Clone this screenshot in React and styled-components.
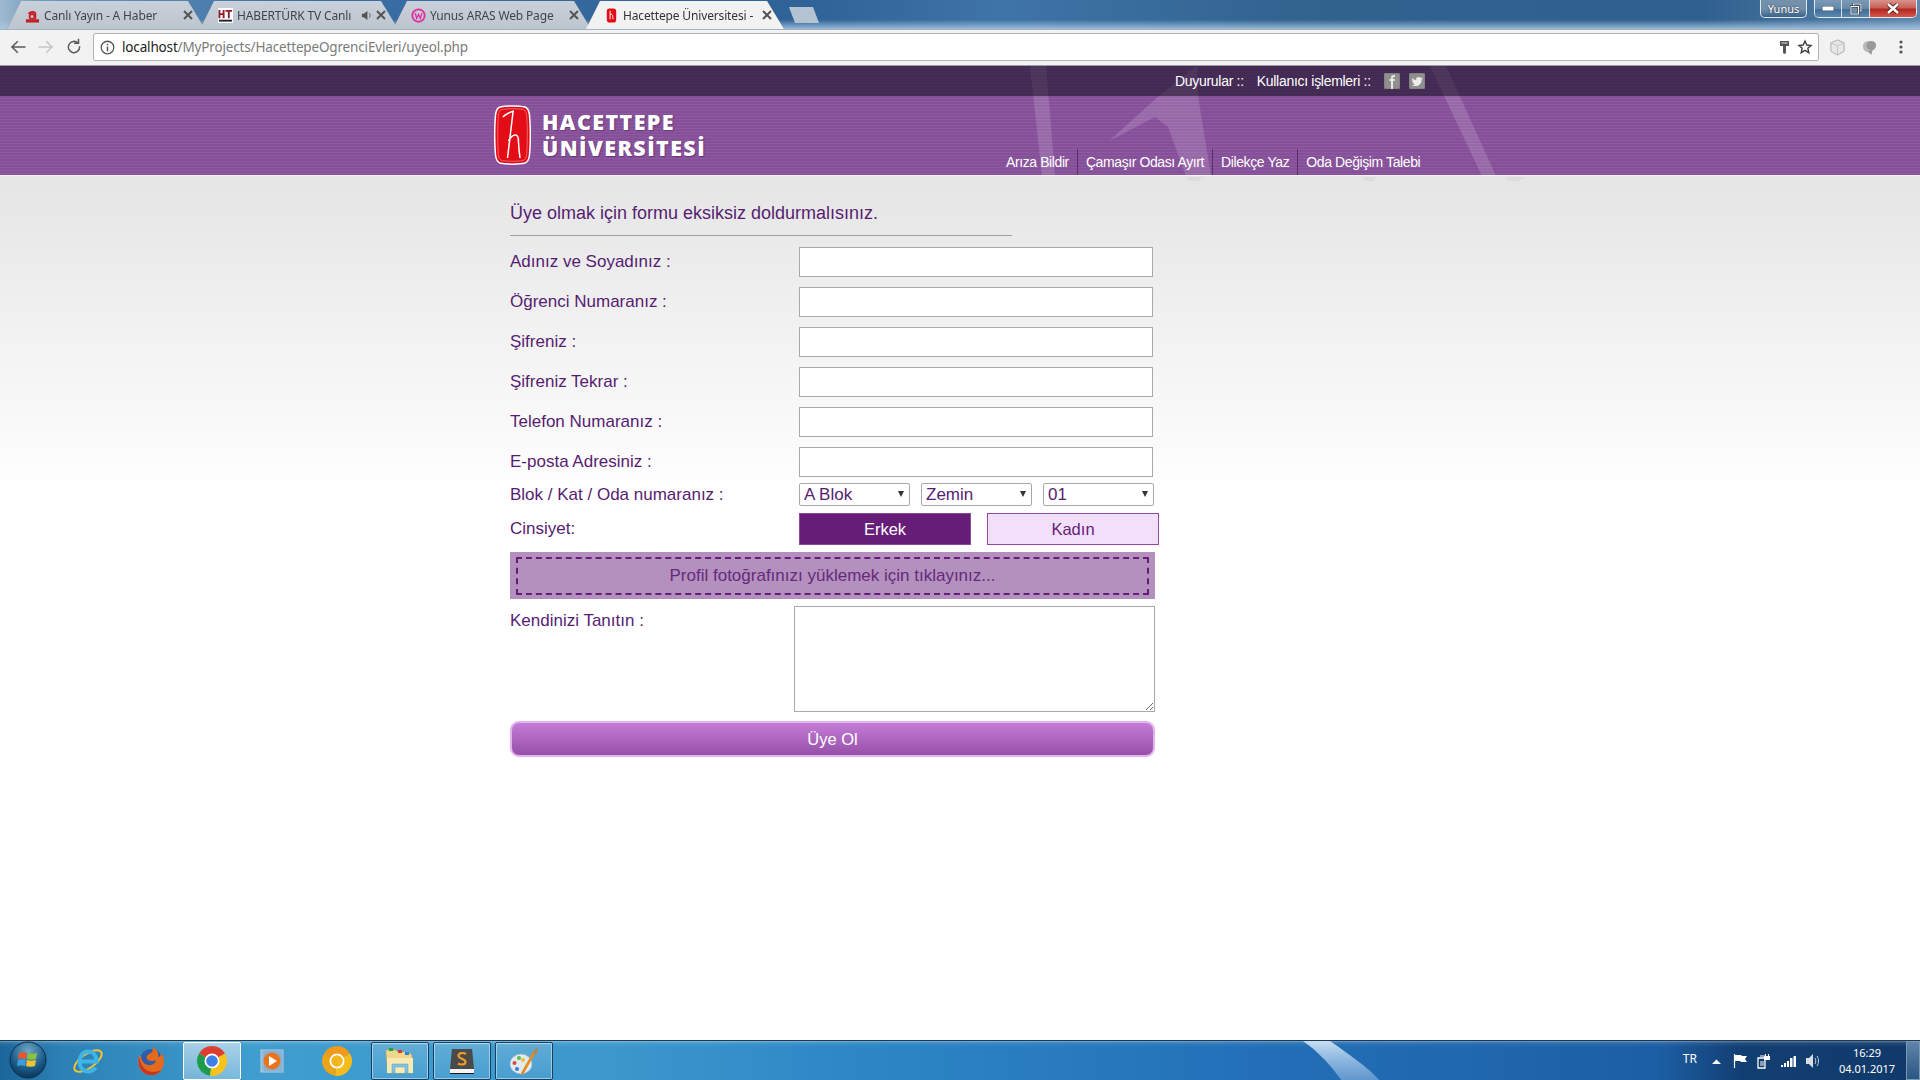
import React from "react";
import styled, { createGlobalStyle } from "styled-components";

const Global = createGlobalStyle`
  html, body { margin: 0; padding: 0; height: 100%; overflow: hidden; }
  #root { height: 100%; }
  * { box-sizing: border-box; }
`;

const Screen = styled.div`
  width: 1920px; height: 1080px; display: flex; flex-direction: column;
  font-family: "Liberation Sans", Arial, sans-serif; background: #fff; overflow: hidden;
`;

/* ---------- browser chrome ---------- */
const TitleBar = styled.div`
  height: 29px; flex: none; display: flex; align-items: flex-start; position: relative; padding-left: 7px;
  background:
    linear-gradient(180deg, rgba(45,93,141,0) 0, rgba(45,93,141,0) 68%, rgba(170,200,226,.85) 100%),
    linear-gradient(90deg, #9fbad0 0, #6f98bb 40px, #3a6fa6 300px, #2f6296 800px, #3f74a8 1000px, #31638f 1300px, #2f5f8e 1700px, #5e88ae 1920px);
`;
const TabRow = styled.div`
  display: flex; height: 29px; align-items: flex-end;
  filter: drop-shadow(0 0 .6px #5d6f80);
`;
const Tab = styled.div`
  width: 198px; height: 28px; margin-right: -5px; padding: 0 12px 0 36px; display: flex; align-items: center; gap: 4px;
  position: relative;
  clip-path: polygon(0 100%, 14px 0, 181px 0, 198px 100%);
  background: ${(p) => (p.$active ? "#f2f2f2" : "linear-gradient(180deg,#c8d1da 0,#bdc6cf 100%)")};
  z-index: ${(p) => (p.$active ? 2 : 1)};
  font: 12px "Noto Sans", "Open Sans", sans-serif; letter-spacing: -0.15px;
  color: ${(p) => (p.$active ? "#333" : "#3d4650")};
`;
const TabIcon = styled.svg`
  position: absolute; left: 18px; top: 7px; width: 15px; height: 15px;
`;
const TabTitle = styled.span`
  flex: 1; min-width: 0; white-space: nowrap; overflow: hidden; margin-left: 1px;
`;
const NewTab = styled.div`
  width: 30px; height: 16px; margin: 7px 0 0 10px; flex: none;
  clip-path: polygon(0 0, 24px 0, 30px 100%, 6px 100%);
  background: #b4c3d1;
`;
const WindowArea = styled.div`
  margin-left: auto; display: flex; height: 18px; padding-right: 3px;
`;
const UserChip = styled.div`
  width: 47px; height: 18px; margin-right: 7px; border: 1px solid #dfe8f0; border-top: none; border-radius: 0 0 5px 5px;
  background: linear-gradient(180deg, #7592ad 0, #6f8ea9 55%, #39638d 100%);
  color: #fff; font: 11px "Noto Sans", sans-serif; text-align: center; line-height: 17px; text-shadow: 0 0 2px #223;
`;
const WinButtons = styled.div`
  display: flex; width: 103px; height: 18px; border: 1px solid #e0e8ef; border-top: none; border-radius: 0 0 5px 5px; overflow: hidden;
`;
const WinBtn = styled.div`
  flex: ${(p) => p.$grow || 1}; display: flex; align-items: center; justify-content: center;
  border-right: ${(p) => (p.$last ? "none" : "1px solid #d4e0ea")};
  background: ${(p) => p.$bg || "linear-gradient(180deg,#7c9ab6 0,#6688a8 50%,#3e6c97 52%,#5d88ad 100%)"};
`;
const Toolbar = styled.div`
  height: 37px; flex: none; display: flex; align-items: center; background: #f2f2f2; border-bottom: 1px solid #9d9d9d; padding-bottom: 1px; border-top: 1px solid #a4b4c3;
`;
const NavIcons = styled.div`
  width: 93px; flex: none; display: flex; align-items: center; gap: 10px; padding-left: 9px;
`;
const Omnibox = styled.div`
  width: 1726px; height: 28px; flex: none; background: #fff; border: 1px solid #b2b2b2; border-radius: 2px;
  display: flex; align-items: center; padding: 0 5px 0 5px;
  font: 13.5px "Noto Sans", sans-serif; color: #7a7a7a;
`;
const InfoIcon = styled.svg`
  width: 15px; height: 15px; margin: 0 7px 0 1px; flex: none;
`;
const Url = styled.span`
  flex: 1; white-space: nowrap; letter-spacing: -0.16px;
  b { font-weight: 400; color: #222; }
`;
const OmniRight = styled.div`
  display: flex; align-items: center; gap: 8px;
`;
const ToolRight = styled.div`
  flex: 1; display: flex; align-items: center; gap: 15px; padding-left: 10px;
  svg:last-child { margin-left: 6px; }
`;

/* ---------- page ---------- */
const Page = styled.main`
  flex: 1; min-height: 0; position: relative; overflow: hidden; display: flex; flex-direction: column;
  background: linear-gradient(180deg, #e5e5e5 110px, #fff 430px);
`;
const Watermark = styled.svg`
  position: absolute; left: 0; top: 0; width: 1920px; height: 120px; pointer-events: none; z-index: 1;
`;
const TopBar = styled.div`
  height: 30px; flex: none; display: flex; justify-content: flex-start; align-items: center; padding-left: 1175px; gap: 13px;
  background: repeating-linear-gradient(180deg, #432a53 0 2px, #472e57 2px 3px);
  color: #fff; font-size: 14px;
`;
const TopLink = styled.span`
  letter-spacing: -0.3px; white-space: nowrap; position: relative; z-index: 2;
`;
const Social = styled.div`
  display: flex; gap: 9px; position: relative; z-index: 2;
`;
const SocialIcon = styled.svg`
  width: 16px; height: 16px; display: block;
`;
const Header = styled.header`
  height: 80px; flex: none; display: flex; align-items: stretch; padding-left: 494px; border-bottom: 1px solid #f4f2f5;
  background: repeating-linear-gradient(180deg, #864f99 0 2px, #8d5a9f 2px 3px);
  position: relative;
`;
const Logo = styled.div`
  display: flex; align-items: flex-start; gap: 11px; padding-top: 9px; width: 512px; position: relative; z-index: 2;
`;
const Shield = styled.svg`
  width: 37px; height: 60px; flex: none;
`;
const LogoText = styled.div`
  display: flex; flex-direction: column; padding-top: 4px;
  font: 800 21.5px/26px "Open Sans", "DejaVu Sans", sans-serif; color: #fff; letter-spacing: 1.4px;
  text-shadow: 1px 1px 1px rgba(70,30,90,.5);
`;
const MainNav = styled.nav`
  display: flex; align-self: flex-end; height: 26px; position: relative; z-index: 2;
`;
const NavLink = styled.a`
  display: flex; align-items: center; padding: 0 8px; color: #fff; font-size: 14px; letter-spacing: -0.4px; white-space: nowrap;
  border-right: ${(p) => (p.$last ? "none" : "1px solid #5b3069")};
  &:first-child { padding-left: 0; }
`;

const FormWrap = styled.form`
  width: 645px; margin-left: 510px; padding-top: 25px; position: relative; z-index: 2;
  color: #571d72; font-size: 16px;
`;
const Heading = styled.h1`
  width: 502px; margin: 0 0 11px; padding-bottom: 10px; border-bottom: 1px solid #a0a0a0;
  font-size: 18px; line-height: 24px; font-weight: 400; color: #571d72; white-space: nowrap;
`;
const Row = styled.div`
  display: flex; align-items: center; height: 30px; margin-bottom: 10px;
`;
const Label = styled.label`
  width: 289px; flex: none; white-space: nowrap; font-size: 17px;
`;
const TextInput = styled.input`
  width: 354px; height: 30px; border: 1px solid #a9a9a9; background: #fff; padding: 0 4px; outline: none; font: inherit;
`;
const SelectRow = styled.div`
  display: flex; align-items: center; height: 23px; margin: -4px 0 7px;
`;
const SelectGroup = styled.div`
  display: flex; gap: 11px;
`;
const SelectBox = styled.div`
  position: relative; width: 111px; height: 23px;
  &::after {
    content: ""; position: absolute; right: 6px; top: 8px; pointer-events: none;
    border-left: 3.5px solid transparent; border-right: 3.5px solid transparent; border-top: 6px solid #333;
  }
`;
const Select = styled.select`
  appearance: none; display: block; width: 111px; height: 23px; border: 1px solid #a9a9a9; border-radius: 2px; background: #fff; padding: 0 0 0 4px;
  font: 17px "Liberation Sans", Arial, sans-serif; color: #571d72; outline: none;
`;
const GenderRow = styled.div`
  display: flex; align-items: center; height: 32px; margin-bottom: 7px;
`;
const GenderGroup = styled.div`
  display: flex; gap: 16px; margin-right: -4px;
`;
const Gender = styled.button`
  width: 172px; height: 32px; border: 1px solid ${(p) => (p.$on ? "#8a4a9e" : "#93499f")}; border-radius: 0; cursor: pointer;
  background: ${(p) => (p.$on ? "#661d78" : "#f2e0fb")}; color: ${(p) => (p.$on ? "#fff" : "#661d78")};
  font: 16.5px "Liberation Sans", Arial, sans-serif; padding: 0;
`;
const Upload = styled.div`
  height: 47px; display: flex; align-items: center; justify-content: center; position: relative;
  background: #b390bd; color: #662a7c; font-size: 17px; margin-bottom: 7px;
  &::after { content: ""; position: absolute; inset: 5px 6px 4px; border: 2px dashed #661d78; }
`;
const AboutRow = styled.div`
  display: flex; align-items: flex-start; margin-bottom: 9px;
`;
const AboutLabel = styled(Label)`
  width: 284px; padding-top: 5px;
`;
const TextArea = styled.textarea`
  display: block; width: 361px; height: 106px; border: 1px solid #a9a9a9; background: #fff; outline: none; resize: both;
`;
const Submit = styled.button`
  display: block; width: 645px; height: 36px; border: 2px solid #e3b5ef; border-radius: 9px; cursor: pointer;
  background: linear-gradient(180deg, #c47dd7 0, #9750a8 100%);
  color: #fff; font: 16.5px "Liberation Sans", Arial, sans-serif; box-shadow: 0 0 1px #e8c8f2;
`;

/* ---------- taskbar ---------- */
const Taskbar = styled.footer`
  height: 40px; flex: none; display: flex; align-items: stretch; position: relative; border-top: 1px solid #1d3a52;
  background:
    linear-gradient(180deg, rgba(255,255,255,.35) 0, rgba(255,255,255,.08) 2px, rgba(255,255,255,0) 6px),
    linear-gradient(90deg, #1a659a 0, #2c80b3 60px, #3f9dcf 250px, #3d98cd 600px, #2d87c6 850px, #2370b8 1250px, #1f66ad 1500px, #1c5ea3 1660px, #123f73 1740px, #113a6b 1900px);
`;
const Swoosh = styled.svg`
  position: absolute; left: 1270px; top: 0; width: 120px; height: 40px;
`;
const StartOrb = styled.svg`
  width: 40px; height: 40px; margin: -1px 0 0 8px; flex: none; align-self: center;
`;
const TaskApps = styled.div`
  display: flex; margin-left: 9px; align-items: stretch; position: relative;
`;
const TaskBtn = styled.div`
  width: ${(p) => p.$w || 62}px; display: flex; align-items: center; justify-content: center; border-radius: 2px;
  ${(p) => p.$open && `border: 1px solid #173f5f; box-shadow: inset 0 0 0 1px rgba(255,255,255,.45); background: linear-gradient(180deg, rgba(255,255,255,.18), rgba(255,255,255,.05)); margin: 1px 2px 0;`}
  ${(p) => p.$focus && `border: 1px solid #fff; background: linear-gradient(180deg, rgba(255,255,255,.55), rgba(255,255,255,.3)); margin: 1px 2px 0;`}
`;
const AppIcon = styled.svg`
  width: 32px; height: 32px;
`;
const Tray = styled.div`
  margin-left: auto; display: flex; align-items: center; color: #fff; position: relative;
`;
const Lang = styled.span`
  font: 12px "Noto Sans", sans-serif; margin: -4px 12px 0 0;
`;
const TrayIcons = styled.div`
  display: flex; align-items: center; gap: 9px; margin-right: 8px;
`;
const TrayIcon = styled.svg`
  width: 15px; height: 16px; display: block;
`;
const Clock = styled.div`
  width: 78px; text-align: center; font: 11px/16px "Noto Sans", sans-serif;
`;
const ShowDesktop = styled.div`
  width: 14px; align-self: stretch; border: 1px solid #7b98b4; background: linear-gradient(180deg, #5f85a8 0, #2a5683 100%);
`;

const rows = [
  "Adınız ve Soyadınız :",
  "Öğrenci Numaranız :",
  "Şifreniz :",
  "Şifreniz Tekrar :",
  "Telefon Numaranız :",
  "E-posta Adresiniz :",
];

const Icon = ({ d, size = 18, color = "#5a5a5a", w = 2 }) => (
  <svg width={size} height={size} viewBox="0 0 24 24" fill="none" stroke={color} strokeWidth={w} strokeLinecap="square">
    <path d={d} />
  </svg>
);

const Close = ({ color = "#555" }) => (
  <svg width="10" height="10" viewBox="0 0 10 10"><path d="M1 1 9 9M9 1 1 9" stroke={color} strokeWidth="2" /></svg>
);

export default function App() {
  return (
    <Screen>
      <Global />
      <TitleBar>
        <TabRow>
          <Tab>
            <TabIcon viewBox="0 0 16 16">
              <rect x="1" y="12" width="14" height="3.5" fill="#c0202a" />
              <path d="M3 6c1-3 7-4 9-1v7H10V6C8 5 5 6 5 7Z" fill="#c8232c" />
              <circle cx="7.5" cy="9" r="2.6" fill="none" stroke="#c8232c" strokeWidth="2" />
            </TabIcon>
            <TabTitle>Canlı Yayın - A Haber</TabTitle>
            <Close />
          </Tab>
          <Tab>
            <TabIcon viewBox="0 0 16 16">
              <rect width="16" height="16" fill="#fff" />
              <path d="M1.500 2v9M6 2v9M1.500 6.500H6" stroke="#8e1a2c" strokeWidth="2" fill="none" />
              <path d="M8 3h7M11.500 3v8" stroke="#8e1a2c" strokeWidth="2" fill="none" />
              <rect x="1" y="12.5" width="14" height="2" fill="#1c2230" />
            </TabIcon>
            <TabTitle>HABERTÜRK TV Canlı</TabTitle>
            <svg width="11" height="11" viewBox="0 0 12 12"><path d="M1 4h2l4-3v10L3 8H1Z" fill="#555" /><path d="M9 3.5c1.4 1.5 1.4 3.5 0 5" stroke="#555" fill="none" /></svg>
            <Close />
          </Tab>
          <Tab>
            <TabIcon viewBox="0 0 16 16">
              <circle cx="8" cy="8" r="6.6" fill="none" stroke="#e52ea0" strokeWidth="2" />
              <path d="M4.500 5.500 6 11l2-4 2 4 1.500-5.500" stroke="#e52ea0" strokeWidth="1.400" fill="none" />
            </TabIcon>
            <TabTitle>Yunus ARAS Web Page</TabTitle>
            <Close />
          </Tab>
          <Tab $active>
            <TabIcon viewBox="0 0 16 16">
              <rect x="3" y="0.5" width="10" height="15" rx="3" fill="#e30d18" />
              <path d="M6.5 3v9M6.5 7c2-1 3 0 3 5" stroke="#fff" strokeWidth="1" fill="none" />
            </TabIcon>
            <TabTitle>Hacettepe Üniversitesi -</TabTitle>
            <Close />
          </Tab>
        </TabRow>
        <NewTab />
        <WindowArea>
          <UserChip>Yunus</UserChip>
          <WinButtons>
            <WinBtn><svg width="12" height="5"><rect width="12" height="5" rx="1" fill="#fff" stroke="#456" /></svg></WinBtn>
            <WinBtn><svg width="12" height="12" viewBox="0 0 12 12" fill="none" stroke="#fff"><rect x="3.5" y="1" width="7.5" height="7" stroke="#345" strokeWidth="2.4" /><rect x="3.5" y="1" width="7.5" height="7" /><rect x="1" y="3.5" width="7.5" height="7.5" stroke="#345" strokeWidth="2.4" fill="#6f90ae" /><rect x="1" y="3.5" width="7.5" height="7.5" /></svg></WinBtn>
            <WinBtn $grow={1.75} $last $bg="linear-gradient(180deg,#d9928a 0,#c8625a 45%,#b3271e 55%,#d4574d 100%)"><svg width="14" height="11" viewBox="0 0 14 11"><path d="M2 1 12 10M12 1 2 10" stroke="#4b1512" strokeWidth="4.2" /><path d="M2 1 12 10M12 1 2 10" stroke="#fff" strokeWidth="2.6" /></svg></WinBtn>
          </WinButtons>
        </WindowArea>
      </TitleBar>

      <Toolbar>
        <NavIcons>
          <Icon d="M21 12H4M11 5l-7 7 7 7" />
          <Icon d="M3 12h17M13 5l7 7-7 7" color="#c6c6c6" />
          <Icon d="M19.5 12a7.5 7.5 0 1 1-2.3-5.4M18 2v5h-5" />
        </NavIcons>
        <Omnibox>
          <InfoIcon viewBox="0 0 16 16">
            <circle cx="8" cy="8" r="6.7" fill="none" stroke="#555" strokeWidth="1.4" />
            <path d="M8 7v5M8 4v1.6" stroke="#555" strokeWidth="1.6" />
          </InfoIcon>
          <Url><b>localhost</b>/MyProjects/HacettepeOgrenciEvleri/uyeol.php</Url>
          <OmniRight>
            <svg width="9" height="14" viewBox="0 0 9 14"><path d="M0 1h9v5H6v7l-1.500 1L3 13V6H0Z" fill="#555" /><rect x="1.500" y="2.500" width="6" height="1" fill="#ddd" /></svg>
            <svg width="16" height="16" viewBox="0 0 24 24" fill="none" stroke="#444" strokeWidth="2.2"><path d="m12 3 2.7 6 6.3.7-4.700 4.300 1.400 6.500L12 17.200 6.300 20.500 7.700 14 3 9.700 9.300 9Z" /></svg>
          </OmniRight>
        </Omnibox>
        <ToolRight>
          <svg width="17" height="17" viewBox="0 0 18 18"><path d="M9 1 16 4v9l-7 4-7-4V4Z" fill="#e6e6e6" stroke="#aaa" /><path d="M2 4l7 3 7-3M9 7v10" fill="none" stroke="#c5c5c5" /></svg>
          <svg width="17" height="17" viewBox="0 0 18 18"><circle cx="8" cy="8" r="6" fill="#b8b8b8" /><circle cx="11" cy="7" r="5" fill="#9a9a9a" /><path d="M7 13l4 4 1-5Z" fill="#999" /></svg>
          <svg width="4" height="14" viewBox="0 0 4 14" fill="#555"><circle cx="2" cy="2" r="1.6" /><circle cx="2" cy="7" r="1.6" /><circle cx="2" cy="12" r="1.6" /></svg>
        </ToolRight>
      </Toolbar>

      <Page>
        <Watermark viewBox="0 66 1920 120">
          <defs>
            <linearGradient id="wm" gradientUnits="userSpaceOnUse" x1="0" x2="0" y1="66" y2="176">
              <stop offset="0" stopColor="#fff" stopOpacity=".05" />
              <stop offset=".27" stopColor="#fff" stopOpacity=".05" />
              <stop offset=".28" stopColor="#fff" stopOpacity=".15" />
              <stop offset="1" stopColor="#fff" stopOpacity=".15" />
            </linearGradient>
          </defs>
          <g fill="url(#wm)">
            <path d="M1030 66h16l9 110h-13Z" />
            <path d="M1109 141 1160 95 1197 66 1198 96 1211 176H1186L1168 127 1155 117Z" />
            <path d="M1430 66h16l50 110h-14Z" />
          </g>
          <g fill="#000" fillOpacity=".04">
            <path d="M1186 177h16l-3 4h-10ZM1362 177h14l-3 4h-8ZM1505 177h20l-6 4h-10Z" />
          </g>
        </Watermark>
        <TopBar>
          <TopLink>Duyurular ::</TopLink>
          <TopLink>Kullanıcı işlemleri ::</TopLink>
          <Social>
            <SocialIcon viewBox="0 0 16 16">
              <rect width="16" height="16" rx="2" fill="#8f8f8f" stroke="#777" />
              <path d="M7 16V8H5.500V6H7V5c0-2 1-3 3-3h1v2h-1c-.7 0-1 .3-1 1v1h2l-.3 2H9v8Z" fill="#e8e8e8" />
            </SocialIcon>
            <SocialIcon viewBox="0 0 16 16">
              <rect width="16" height="16" rx="2" fill="#8f8f8f" stroke="#777" />
              <path d="M13 5c-.5.200-1 .400-1.400.400.500-.300.900-.8 1-1.300-.5.300-1 .5-1.500.6a2.400 2.400 0 0 0-4 2.200C5.500 6.800 4.200 6 3.300 4.900c-.5 1-.2 2 .7 2.800-.4 0-.7-.1-1-.3 0 1.100.8 2 1.900 2.300-.3.100-.7.100-1 0 .3 1 1.100 1.500 2.200 1.600-1 .7-2 1-3.100.9 3.500 2 9.700.8 9.600-5.800.5-.3.800-.6 1.100-1Z" fill="#ececec" />
            </SocialIcon>
          </Social>
        </TopBar>
        <Header>
          <Logo>
            <Shield viewBox="0 0 37 60">
              <path d="M6 2C12 .5 25 .5 31 2c3 1 4 4 4.500 8 1 12 1 28 0 40-.5 4-1.500 7-4.500 8-6 1.500-19 1.500-25 0-3-1-4-4-4.500-8-1-12-1-28 0-40C2 6 3 3 6 2Z" fill="#e30d18" stroke="#fff" strokeWidth="1.500" />
              <path d="M8 4.500C13 3.500 24 3.500 29 4.500c2.500.8 3.300 3 3.700 6 .8 12 .8 27 0 39-.4 3-1.200 5.200-3.700 6-5 1-16 1-21 0-2.500-.8-3.300-3-3.700-6-.8-12-.8-27 0-39 .4-3 1.200-5.200 3.700-6Z" fill="none" stroke="#fff" strokeWidth=".5" strokeOpacity=".7" />
              <path d="M8.800 12C12 9 16 7 20 6M19 7c-1.500 12-3.500 30-5.500 46M14.500 36c2-4 5-6 7-6 2.500 0 3 3 3 7 .2 6 .8 11 1.500 16" fill="none" stroke="#fff" strokeWidth="1.500" />
            </Shield>
            <LogoText>
              <span>HACETTEPE</span>
              <span>ÜNİVERSİTESİ</span>
            </LogoText>
          </Logo>
          <MainNav>
            <NavLink>Arıza Bildir</NavLink>
            <NavLink>Çamaşır Odası Ayırt</NavLink>
            <NavLink>Dilekçe Yaz</NavLink>
            <NavLink $last>Oda Değişim Talebi</NavLink>
          </MainNav>
        </Header>
        <FormWrap>
          <Heading>Üye olmak için formu eksiksiz doldurmalısınız.</Heading>
          {rows.map((r) => (
            <Row key={r}>
              <Label>{r}</Label>
              <TextInput type={r.startsWith("Şifre") ? "password" : "text"} />
            </Row>
          ))}
          <SelectRow>
            <Label>Blok / Kat / Oda numaranız :</Label>
            <SelectGroup>
              <SelectBox><Select defaultValue="A Blok"><option>A Blok</option><option>B Blok</option></Select></SelectBox>
              <SelectBox><Select defaultValue="Zemin"><option>Zemin</option><option>1. Kat</option></Select></SelectBox>
              <SelectBox><Select defaultValue="01"><option>01</option><option>02</option></Select></SelectBox>
            </SelectGroup>
          </SelectRow>
          <GenderRow>
            <Label>Cinsiyet:</Label>
            <GenderGroup>
              <Gender type="button" $on>Erkek</Gender>
              <Gender type="button">Kadın</Gender>
            </GenderGroup>
          </GenderRow>
          <Upload>Profil fotoğrafınızı yüklemek için tıklayınız...</Upload>
          <AboutRow>
            <AboutLabel>Kendinizi Tanıtın :</AboutLabel>
            <TextArea />
          </AboutRow>
          <Submit type="button">Üye Ol</Submit>
        </FormWrap>
      </Page>

      <Taskbar>
        <Swoosh viewBox="0 0 120 40"><defs><linearGradient id="sw" x1="0" x2="0" y1="0" y2="1"><stop offset="0" stopColor="#cfe3f5" stopOpacity=".95" /><stop offset="1" stopColor="#8fb8e2" stopOpacity=".55" /></linearGradient></defs><path d="M33 0h27c20 14 40 28 50 40H72C62 26 50 12 33 0Z" fill="url(#sw)" /></Swoosh>
        <StartOrb viewBox="0 0 40 40">
          <defs><radialGradient id="orb" cx=".5" cy=".25" r=".8"><stop offset="0" stopColor="#6fa8c8" /><stop offset=".6" stopColor="#1b5c8a" /><stop offset="1" stopColor="#0a2e4c" /></radialGradient></defs>
          <circle cx="20" cy="20" r="18" fill="url(#orb)" stroke="#0c2f4a" />
          <path d="M11 13c3-1 5-1 8 0l-1 6c-3-1-5-1-8 0Z" fill="#e8562a" />
          <path d="M20 13c3 1 6 1 9 0l-1 6c-3 1-6 1-9 0Z" fill="#8ac43f" />
          <path d="M10 20c3-1 5-1 8 0l-1 6c-3-1-5-1-8 0Z" fill="#3d9be0" />
          <path d="M19 20c3 1 6 1 9 0l-1 6c-3 1-6 1-9 0Z" fill="#f4c430" />
        </StartOrb>
        <TaskApps>
          <TaskBtn $w={62}>
            <AppIcon viewBox="0 0 32 32">
              <ellipse cx="16" cy="16" rx="16" ry="7" transform="rotate(-35 16 16)" fill="none" stroke="#f4c430" strokeWidth="2" />
              <path d="M7.500 16.500h17c0-6-3.500-10-8.500-10S7.500 11 7.500 16.500 11 26.500 16 26.500c3.500 0 6-1.500 7.500-4" fill="none" stroke="#3fb4e8" strokeWidth="4" />
            </AppIcon>
          </TaskBtn>
          <TaskBtn $w={62}>
            <AppIcon viewBox="0 0 32 32">
              <circle cx="17" cy="15" r="11" fill="#2f5da8" />
              <path d="M5 12C2 22 9 31 18 30c7 0 12-6 12-14 0-4-2-7-3-8 0 3-2 4-3 4 1-4-1-8-6-10 2 3 0 6-3 7-3 2-3 4-1 6 3 2 7 1 8 0 0 3-4 6-8 5-4-1-7-4-7-9-1 1-2 0-2-1Z" fill="#e56a1e" />
              <path d="M5 12C3 22 9 31 18 30c4 0 7-2 9-5-4 2-10 3-15 0-4-3-6-8-7-13Z" fill="#c6361e" />
            </AppIcon>
          </TaskBtn>
          <TaskBtn $focus $w={58}>
            <AppIcon viewBox="0 0 32 32">
              <path d="M16 16 3 8.500A15 15 0 0 1 29 8.500Z" fill="#dc3d2f" />
              <path d="M3 8.500A15 15 0 0 0 14 30.800L16 16Z" fill="#1f9b4c" />
              <path d="M29 8.500A15 15 0 0 1 14 30.800L16 16Z" fill="#f6c21c" />
              <circle cx="16" cy="16" r="7.500" fill="#fff" />
              <circle cx="16" cy="16" r="5.800" fill="#3f7fe8" />
            </AppIcon>
          </TaskBtn>
          <TaskBtn $w={62}>
            <AppIcon viewBox="0 0 32 32">
              <rect x="3" y="5" width="22" height="22" fill="#8db8d6" stroke="#b5d0e4" />
              <rect x="6" y="5" width="20" height="22" fill="#7fb0d2" opacity=".5" />
              <circle cx="14" cy="16" r="8.500" fill="#e8741f" />
              <path d="M11 11v10l8-5Z" fill="#fff" />
            </AppIcon>
          </TaskBtn>
          <TaskBtn $w={64}>
            <AppIcon viewBox="0 0 32 32">
              <path d="M16 16 3 8.500A15 15 0 0 1 29 8.500Z" fill="#f09a1a" />
              <path d="M3 8.500A15 15 0 0 0 14 30.800L16 16Z" fill="#eda518" />
              <path d="M29 8.500A15 15 0 0 1 14 30.800L16 16Z" fill="#f6bc1c" />
              <circle cx="16" cy="16" r="7.500" fill="#fff" />
              <circle cx="16" cy="16" r="5.800" fill="#f2b61e" />
            </AppIcon>
          </TaskBtn>
          <TaskBtn $open $w={58}>
            <AppIcon viewBox="0 0 32 32">
              <path d="M2 8V5h10l2 2h10l4 3v18H4Z" fill="#eed98a" stroke="#c7a85a" strokeWidth=".6" />
              <rect x="5" y="3" width="4" height="3" fill="#25a045" />
              <rect x="14" y="5" width="4" height="3" fill="#d33" />
              <rect x="21" y="7" width="4" height="3" fill="#2b7fd8" />
              <path d="M3 13h26v15H3Z" fill="#f8eab0" />
              <path d="M8 28v-9h16v9h-3v-6H11v6Z" fill="#7fc4e2" stroke="#5a9cc0" strokeWidth=".5" />
            </AppIcon>
          </TaskBtn>
          <TaskBtn $open $w={58}>
            <AppIcon viewBox="0 0 32 32">
              <path d="M6 4h20l2 20H4Z" fill="#4a4a4a" />
              <path d="M4 24h24v5H4Z" fill="#f4f4f4" />
              <path d="M4 28h24v1H4Z" fill="#1b1b1b" />
              <path d="M20 9c-2-1.500-7-1.500-7.500 1.500-.5 3.500 7 3 7 6.500 0 3-5 3-7.500 1.500" fill="none" stroke="#f09a2a" strokeWidth="2.200" />
            </AppIcon>
          </TaskBtn>
          <TaskBtn $open $w={58}>
            <AppIcon viewBox="0 0 32 32">
              <ellipse cx="13" cy="19" rx="11" ry="10" fill="#dfeaf2" stroke="#9cb4c6" strokeWidth=".6" />
              <circle cx="11" cy="13" r="2" fill="#5cba47" />
              <circle cx="6.500" cy="18" r="2" fill="#e0453a" />
              <circle cx="9" cy="24" r="2" fill="#3a7bd5" />
              <circle cx="15" cy="15" r="2" fill="#f1c232" />
              <path d="M14 29 27 6" stroke="#e98a1a" strokeWidth="2.600" />
              <path d="M25 8l4-6 1 3-2 5Z" fill="#b98250" />
            </AppIcon>
          </TaskBtn>
        </TaskApps>
        <Tray>
          <Lang>TR</Lang>
          <TrayIcons>
            <TrayIcon viewBox="0 0 15 16"><path d="M3 10h9L7.500 5.500Z" fill="#fff" transform="translate(0 1)" /></TrayIcon>
            <TrayIcon viewBox="0 0 15 16"><path d="M1.500 1v14" stroke="#fff" strokeWidth="1.200" /><path d="M2 2h6l1 1h5l-2 3 2 3H8L7 8H2Z" fill="#fff" /></TrayIcon>
            <TrayIcon viewBox="0 0 15 16"><path d="M1 5h7v10H1Z" fill="#113a6b" stroke="#fff" strokeWidth="1.300" /><path d="M7 7h6V3h-1v-2h-1v2H9v-2H8v2H7v4Z" fill="#fff" /><path d="M3 3h5M4 8v5M6 8v5" stroke="#fff" /></TrayIcon>
            <TrayIcon viewBox="0 0 15 16"><g fill="#fff"><rect x="0" y="12" width="2" height="2" /><rect x="3" y="10" width="2" height="4" /><rect x="6" y="8" width="2" height="6" /><rect x="9" y="5" width="2.500" height="9" /><rect x="12.500" y="3" width="2.500" height="11" /></g></TrayIcon>
            <TrayIcon viewBox="0 0 15 16"><path d="M1 5h3l4-4v14l-4-4H1Z" fill="#d8dee6" /><path d="M10 5c1 2 1 4 0 6M12 3c2 3 2 7 0 10" stroke="#c8d2dc" fill="none" /></TrayIcon>
          </TrayIcons>
          <Clock>16:29<br />04.01.2017</Clock>
          <ShowDesktop />
        </Tray>
      </Taskbar>
    </Screen>
  );
}
